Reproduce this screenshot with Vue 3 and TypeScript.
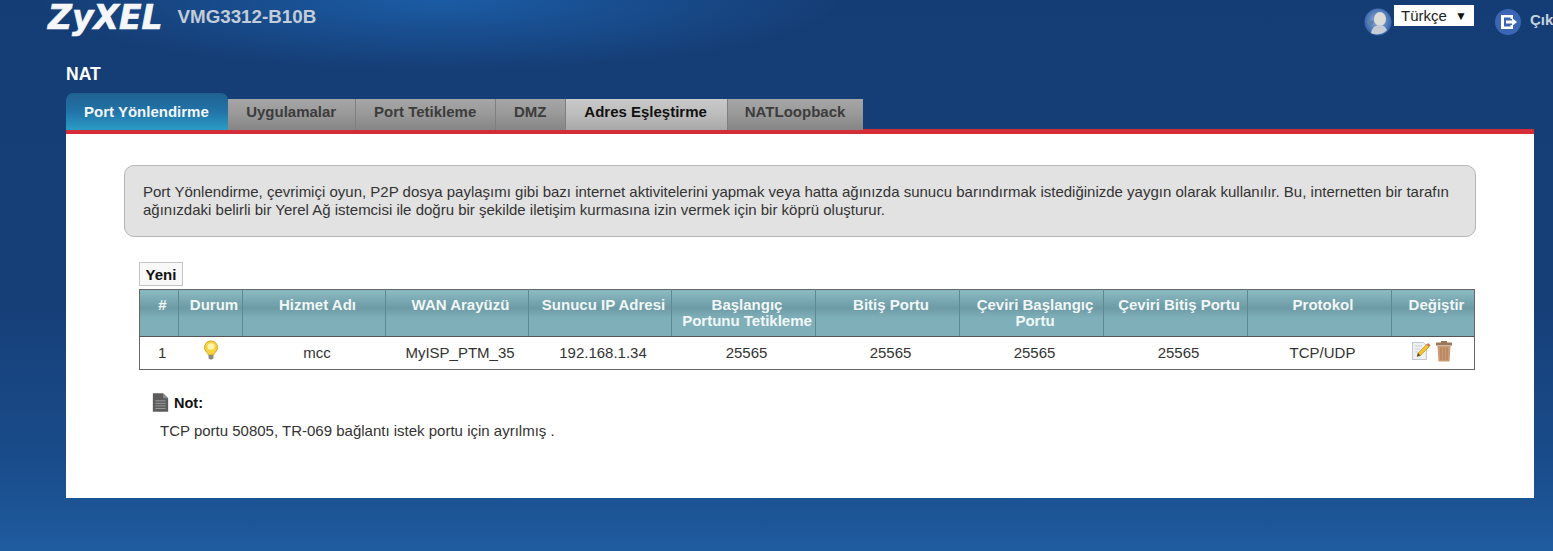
<script setup lang="ts">
const tabs = [
  { label: 'Port Yönlendirme', state: 'active' },
  { label: 'Uygulamalar', state: '' },
  { label: 'Port Tetikleme', state: '' },
  { label: 'DMZ', state: '' },
  { label: 'Adres Eşleştirme', state: 'light' },
  { label: 'NATLoopback', state: '' },
];

const columns = [
  '#',
  'Durum',
  'Hizmet Adı',
  'WAN Arayüzü',
  'Sunucu IP Adresi',
  'Başlangıç Portunu Tetikleme',
  'Bitiş Portu',
  'Çeviri Başlangıç Portu',
  'Çeviri Bitiş Portu',
  'Protokol',
  'Değiştir',
];

const row = ['mcc', 'MyISP_PTM_35', '192.168.1.34', '25565', '25565', '25565', '25565', 'TCP/UDP'];
</script>

<template>
  <div class="page">
    <header class="topbar">
      <div class="brand">
        <span class="logo">ZyXEL</span>
        <span class="model">VMG3312-B10B</span>
      </div>
      <div class="tools">
        <svg class="user-icon" viewBox="0 0 28 28" aria-hidden="true">
          <defs>
            <radialGradient id="userGlow" cx="50%" cy="45%" r="55%">
              <stop offset="0" stop-color="#9db8da" />
              <stop offset="1" stop-color="#2f5fa8" />
            </radialGradient>
          </defs>
          <circle cx="14" cy="14" r="13.500" fill="url(#userGlow)" />
          <ellipse cx="16" cy="11" rx="6" ry="7" fill="#dcdcd8" />
          <path d="M7 25c1-6 5-8 9-8 3 0 6 2 7 5-3 4-11 6-16 3z" fill="#c5ccd4" />
          <path d="M3 14c2-2 5-2 7 0l-2 3c-2 0-4-1-5-3z" fill="#5d7fa8" />
        </svg>
        <div class="lang">
          <span>Türkçe</span>
          <span class="caret">▼</span>
        </div>
        <svg class="exit-icon" viewBox="0 0 28 28" aria-hidden="true">
          <circle cx="14" cy="14" r="13" fill="#3a66b4" />
          <path d="M7 7h12v4h-2.500V9.500H10v9h6.500V17H19v4H7z" fill="#fff" />
          <path d="M12 12.500h6V10l5 4-5 4v-2.500h-6z" fill="#fff" />
        </svg>
        <span class="exit-label">Çıkış</span>
      </div>
    </header>

    <main class="main">
      <h1 class="title">NAT</h1>
      <nav class="tabs">
        <div v-for="tab in tabs" :key="tab.label" class="tab" :class="tab.state">{{ tab.label }}</div>
      </nav>

      <section class="panel">
        <p class="intro">
          Port Yönlendirme, çevrimiçi oyun, P2P dosya paylaşımı gibi bazı internet aktivitelerini yapmak veya hatta ağınızda sunucu barındırmak istediğinizde yaygın olarak kullanılır. Bu, internetten bir tarafın ağınızdaki belirli bir Yerel Ağ istemcisi ile doğru bir şekilde iletişim kurmasına izin vermek için bir köprü oluşturur.
        </p>

        <div class="rules">
          <button type="button" class="new-btn">Yeni</button>
          <table class="grid">
            <colgroup>
              <col class="c-num" />
              <col class="c-state" />
              <col class="c-mid" />
              <col class="c-mid" />
              <col class="c-mid" />
              <col class="c-wide" />
              <col class="c-wide" />
              <col class="c-wide" />
              <col class="c-wide" />
              <col class="c-wide" />
              <col class="c-edit" />
            </colgroup>
            <thead>
              <tr>
                <th v-for="col in columns" :key="col">{{ col }}</th>
              </tr>
            </thead>
            <tbody>
              <tr>
                <td>1</td>
                <td class="icon-cell">
                  <svg class="bulb" viewBox="0 0 16 20" aria-hidden="true">
                    <path d="M8 1a6.500 6.500 0 0 0-4 11.600c.8.700 1.200 1.400 1.300 2.400h5.400c.1-1 .5-1.700 1.300-2.400A6.500 6.500 0 0 0 8 1z" fill="#f7d33f" stroke="#d9a520" stroke-width="1" />
                    <ellipse cx="8" cy="6.500" rx="3.500" ry="3.300" fill="#fdf3b0" />
                    <path d="M5.500 15h5v3.200L9 19.500H7l-1.500-1.300z" fill="#8b8b84" />
                  </svg>
                </td>
                <td v-for="(cell, i) in row" :key="i">{{ cell }}</td>
                <td class="icon-cell">
                  <span class="actions">
                    <svg class="action-edit" viewBox="0 0 20 20" aria-hidden="true">
                      <path d="M1.500 1.500h11l3 3v14h-14z" fill="#eef1f3" stroke="#c3c9cf" stroke-width="1" />
                      <path d="M4 5h7M4 8h5M4 11h3" stroke="#c9ced3" stroke-width="1" />
                      <path d="M6 15.500l1-3.500L15.500 3.500 18 6l-8.500 8.500z" fill="#f1c232" stroke="#b98a1b" stroke-width=".6" />
                      <path d="M15.500 3.500l1.500-1.500 2.500 2.500L18 6z" fill="#d86f4a" />
                      <path d="M6 15.500l1-3.500 2.500 2.500z" fill="#5a4a32" />
                    </svg>
                    <svg class="action-trash" viewBox="0 0 18 21" aria-hidden="true">
                      <rect x="1" y="1.500" width="16" height="3" fill="#9a7757" />
                      <rect x="6" y="0" width="6" height="2" fill="#9a7757" />
                      <path d="M2.500 5h13l-1 15.500h-11z" fill="#cb9a72" />
                      <path d="M6 6.500v12.500M9 6.500v12.500M12 6.500v12.500" stroke="#a87c5a" stroke-width="1.100" />
                    </svg>
                  </span>
                </td>
              </tr>
            </tbody>
          </table>
        </div>

        <div class="note">
          <div class="note-head">
            <svg class="note-icon" viewBox="0 0 20 22" aria-hidden="true">
              <path d="M1 0h12l6 6v16H1z" fill="#5c5c5c" />
              <path d="M13 0l6 6h-6z" fill="#8a8a8a" />
              <path d="M4 9h12M4 12h12M4 15h12M4 18h12" stroke="#a8a8a8" stroke-width="1" />
            </svg>
            <strong>Not:</strong>
          </div>
          <p class="note-text">TCP portu 50805, TR-069 bağlantı istek portu için ayrılmış .</p>
        </div>
      </section>
    </main>
  </div>
</template>

<style>
html,
body {
  margin: 0;
  overflow: hidden;
}
</style>

<style scoped>
.page {
  position: relative;
  width: 1553px;
  height: 551px;
  overflow: hidden;
  box-sizing: border-box;
  font-family: 'Liberation Sans', Arial, sans-serif;
  color: #222;
  background:
    radial-gradient(ellipse 400px 70px at 440px 0, rgba(30, 105, 185, 0.7), rgba(30, 105, 185, 0) 100%),
    linear-gradient(180deg, #153d75 0%, #163f78 55%, #1a4d8c 85%, #1f5c9f 100%);
}

.topbar {
  display: flex;
  justify-content: space-between;
  height: 38px;
}

.brand {
  display: flex;
  align-items: flex-start;
  padding-left: 48px;
}

.logo {
  font-family: 'DejaVu Sans', sans-serif;
  font-size: 33px;
  line-height: 36px;
  font-weight: 700;
  font-style: italic;
  color: #f4f6f9;
  -webkit-text-stroke: 0.6px #f4f6f9;
}

.model {
  margin: 6px 0 0 15px;
  font-size: 18.800px;
  line-height: 22px;
  font-weight: 700;
  color: #c3ccd8;
}

.tools {
  display: flex;
  align-items: flex-start;
  width: 189px;
  flex: none;
  white-space: nowrap;
}

.user-icon {
  width: 28px;
  height: 28px;
  margin-top: 8px;
  flex: none;
}

.lang {
  display: flex;
  justify-content: space-between;
  align-items: center;
  box-sizing: border-box;
  width: 80px;
  height: 21px;
  margin: 5px 0 0 2px;
  padding: 0 7px 0 7px;
  background: #fff;
  font-size: 15px;
  color: #222;
  flex: none;
}

.caret {
  font-size: 12px;
  color: #111;
}

.exit-icon {
  width: 28px;
  height: 28px;
  margin: 8px 0 0 20px;
  flex: none;
}

.exit-label {
  margin: 11px 0 0 8px;
  font-size: 15px;
  font-weight: 700;
  color: #c7d2e0;
}

.main {
  width: 1468px;
  margin-left: 66px;
}

.title {
  height: 29px;
  margin: 0;
  padding-top: 26px;
  font-size: 17.500px;
  line-height: 20px;
  font-weight: 700;
  color: #fff;
}

.tabs {
  position: relative;
  z-index: 1;
  display: flex;
  align-items: flex-end;
  height: 36px;
}

.tab {
  display: flex;
  align-items: center;
  justify-content: center;
  box-sizing: border-box;
  height: 31px;
  margin-bottom: -1px;
  padding: 0 18.400px 6px;
  font-size: 15px;
  font-weight: 700;
  color: #3c3c3c;
  border-right: 1px solid #7f7f7f;
  background: linear-gradient(180deg, #a6a6a6 0%, #9a9a9a 45%, #858585 100%);
}

.tab:last-child {
  padding: 0 17.500px 6px 16.500px;
  border-right: 0;
}

.tab.active {
  height: 37px;
  padding: 0 19px 1px 18px;
  border-right: 0;
  border-radius: 7px 7px 0 0;
  color: #f2f7fb;
  background: linear-gradient(180deg, #1f6190 0%, #2273a8 50%, #2a9cc6 100%);
}

.tab.light {
  padding-right: 20.400px;
  color: #111;
  background: linear-gradient(180deg, #c9c9c9 0%, #bcbcbc 50%, #a8a8a8 100%);
}

.panel {
  box-sizing: border-box;
  height: 369px;
  padding: 31px 58px 0;
  border-top: 5px solid #d42d38;
  background: #fff;
}

.intro {
  box-sizing: border-box;
  height: 72px;
  margin: 0;
  padding: 17px 18px 0;
  border: 1px solid #b5b5b5;
  border-radius: 10px;
  background: #e2e2e2;
  font-size: 15px;
  line-height: 18px;
  color: #333;
}

.rules {
  padding: 25px 1px 0 15px;
}

.new-btn {
  display: block;
  box-sizing: border-box;
  width: 44px;
  height: 24px;
  margin: 0 0 3px;
  padding: 0;
  border: 1px solid #c4c4c4;
  background: #f8f8f8;
  font-family: inherit;
  font-size: 15px;
  font-weight: 700;
  color: #111;
}

.grid {
  width: 1335px;
  table-layout: fixed;
  border-collapse: collapse;
  border: 1px solid #666;
  font-size: 15px;
}

.c-num {
  width: 39px;
}

.c-state {
  width: 64px;
}

.c-mid {
  width: 143px;
}

.c-wide {
  width: 144px;
}

.c-edit {
  width: 83px;
}

.grid th {
  box-sizing: border-box;
  height: 47px;
  padding: 7px 3px 0 10px;
  vertical-align: top;
  line-height: 16px;
  font-weight: 700;
  color: #f1f6f7;
  border-left: 1px solid #5f8890;
  border-bottom: 1px solid #555;
  background: linear-gradient(180deg, #8bbac3 0%, #6d9ba5 38%, #7fb0b9 60%, #7fb0b9 100%);
}

.grid th:first-child {
  border-left: 0;
}

.grid td {
  box-sizing: border-box;
  height: 33px;
  padding: 0 2px 2px 8px;
  text-align: center;
  color: #333;
  background: #fff;
}

.grid td.icon-cell {
  padding: 0;
  line-height: 0;
}

.bulb {
  display: block;
  width: 16px;
  height: 20px;
  margin: -6px auto 0;
}

.actions {
  display: flex;
  justify-content: center;
  align-items: flex-start;
  gap: 4px;
  margin: -4px 2px 0 0;
}

.action-edit {
  display: block;
  width: 20px;
  height: 20px;
}

.action-trash {
  display: block;
  width: 18px;
  height: 21px;
}

.note {
  padding: 22px 0 0 28px;
}

.note-head {
  display: flex;
  align-items: center;
  gap: 5px;
  height: 22px;
  font-size: 14.500px;
  color: #111;
}

.note-icon {
  width: 17px;
  height: 21px;
  margin-top: -1px;
  flex: none;
}

.note-text {
  margin: 9px 0 0 8px;
  font-size: 15px;
  line-height: 16px;
  color: #333;
}
</style>
